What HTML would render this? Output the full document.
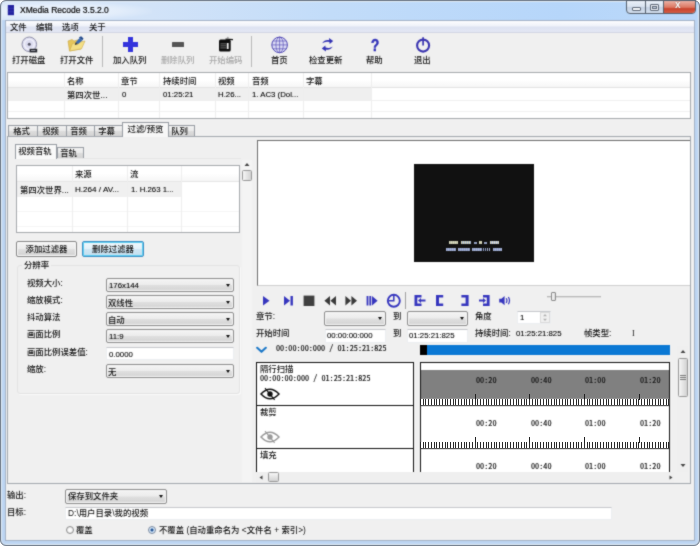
<!DOCTYPE html>
<html lang="zh-CN">
<head>
<meta charset="utf-8">
<title>XMedia Recode 3.5.2.0</title>
<style>
*{box-sizing:border-box;margin:0;padding:0}
html,body{width:700px;height:546px;overflow:hidden;background:#fff}
body{font-family:"Liberation Sans","Noto Sans CJK SC",sans-serif;font-size:8.4px;font-weight:500;color:#111;position:relative;line-height:1}
#root{position:absolute;left:0;top:0;width:700px;height:546px;overflow:hidden;filter:url(#soft);will-change:transform}
#over{position:absolute;left:0;top:0;width:700px;height:546px;overflow:hidden;pointer-events:none}
.a{position:absolute}
.t{position:absolute;white-space:nowrap;line-height:10px;height:10px}
.l{font-size:7.8px;color:#000;-webkit-text-stroke:.1px #222}
.m{font-family:"Noto Sans Mono CJK SC","IPAGothic",monospace;font-size:8.2px;font-weight:400;color:#0c0c0c;-webkit-text-stroke:.15px #111}
#frame{left:0;top:0;width:700px;height:546px;background:#bdd5f2;border:1px solid #667180;border-radius:6px;box-shadow:inset 0 0 0 1px #e4f0fb}
#client{left:5px;top:20px;width:690px;height:521px;background:#f0f0f0;border:1px solid #a4b2c6}
#menubar{left:6px;top:21px;width:688px;height:12px;background:linear-gradient(180deg,#fcfcfe 0,#eff2f9 45%,#dde2f1 55%,#e3e7f4 100%);border-bottom:1px solid #d2d6e3}
.lb{background:#fff;border:1px solid #a6a9ad}
.cb{border:1px solid #8d8d8d;border-radius:2px;background:linear-gradient(180deg,#f4f4f4 0,#ececec 48%,#dfdfdf 52%,#d3d3d3 100%);box-shadow:inset 0 0 0 1px #f6f6f6}
.cb:after{content:"";position:absolute;right:3px;top:50%;margin-top:-1.5px;border:2.8px solid transparent;border-top:3px solid #111;border-bottom:0}
.tb{background:#fff;border:1px solid #eceef1;border-top-color:#c6c8cc}
.btn{border:1px solid #868686;border-radius:2px;background:linear-gradient(180deg,#f4f4f4 0,#ececec 48%,#dfdfdf 52%,#d1d1d1 100%);box-shadow:inset 0 0 0 1px #fbfbfb;text-align:center}
.tab{position:absolute;border:1px solid #979ca3;border-bottom:0;background:linear-gradient(180deg,#f2f2f2 0,#e9e9e9 50%,#dcdcdc 52%,#d3d3d3 100%);text-align:center;white-space:nowrap;overflow:visible}
.tab.s{background:#fff;z-index:2}
.vl{position:absolute;width:1px;background:#eeeeee;z-index:1}
</style>
</head>
<body>
<svg width="0" height="0" style="position:absolute"><defs><filter id="soft" x="0" y="0" width="100%" height="100%" color-interpolation-filters="sRGB"><feConvolveMatrix order="3" kernelMatrix="0.03 0.09 0.03 0.09 0.52 0.09 0.03 0.09 0.03" divisor="1" edgeMode="duplicate" preserveAlpha="true"/></filter></defs></svg>
<div id="root">
<div class="a" id="frame"></div>
<div class="a" style="left:2px;top:2px;width:696px;height:18px;background:linear-gradient(90deg,#dae8f9 0,#d2e3f8 150px,#c2dcf9 330px,#b6d6fa 560px,#bbd8f9 100%)"></div>
<div class="a" id="client"></div>
<div class="a" id="menubar"></div>

<!-- title -->
<div class="a" style="left:2px;top:2px;width:150px;height:18px;background:radial-gradient(ellipse at 40% 50%,rgba(255,255,255,.55) 0,rgba(255,255,255,.35) 45%,rgba(255,255,255,0) 75%)"></div>
<svg class="a" style="left:7px;top:5px" width="8" height="11" viewBox="0 0 8 11"><rect x="0.800" y="0" width="6.200" height="10.200" fill="#2424a0"/><path d="M0.800 3.400h6.200M0.800 6.800h6.200" stroke="#3a3ab8" stroke-width=".6"/></svg>
<div class="t" style="left:20px;top:5px;font-size:8.5px;color:#000;-webkit-text-stroke:.2px #111">XMedia Recode 3.5.2.0</div>

<!-- caption buttons -->
<div class="a" style="left:626px;top:0;width:70px;height:14px;border:1px solid #55606e;border-radius:0 0 4px 4px;overflow:hidden;background:linear-gradient(180deg,#e9eff7 0,#d9e3f0 45%,#c3d0e2 55%,#d3dfee 100%)">
  <div class="a" style="left:18px;top:0;width:1px;height:14px;background:#55606e"></div>
  <div class="a" style="left:36px;top:0;width:33px;height:14px;border-left:1px solid #55606e;background:linear-gradient(180deg,#ebb0a4 0,#dc7863 45%,#c9432d 55%,#d66a52 100%)"></div>
  <div class="a" style="left:5px;top:6px;width:9px;height:4px;border:1px solid #5d6776;background:#f6f9fc;border-radius:1px"></div>
  <div class="a" style="left:23px;top:3px;width:9px;height:7px;border:1px solid #5d6776;background:#eef2f8;border-radius:1px"></div>
  <div class="a" style="left:25px;top:5px;width:5px;height:3px;border:1px solid #5d6776;background:#cbd7e8"></div>
  <div class="t" style="left:48px;top:-1px;font-size:10px;font-weight:bold;color:#fff;text-shadow:0 0 1px #5a2a22;font-family:'Liberation Sans',sans-serif">x</div>
</div>

<!-- menu -->
<div class="t" style="left:10px;top:22px">文件</div>
<div class="t" style="left:36px;top:22px">编辑</div>
<div class="t" style="left:62px;top:22px">选项</div>
<div class="t" style="left:89px;top:22px">关于</div>

<!-- toolbar -->
<div class="a" style="left:6px;top:33px;width:688px;height:37px;background:#f0f0f0"></div>
<div class="a" style="left:102px;top:36px;width:1px;height:31px;background:#b8b8b8"></div>
<div class="a" style="left:251px;top:36px;width:1px;height:31px;background:#b8b8b8"></div>
<div class="t" style="left:12px;top:55px">打开磁盘</div>
<div class="t" style="left:60px;top:55px">打开文件</div>
<div class="t" style="left:113px;top:55px">加入队列</div>
<div class="t" style="left:161px;top:55px;color:#a8a8a8">删除队列</div>
<div class="t" style="left:209px;top:55px;color:#a8a8a8">开始编码</div>
<div class="t" style="left:271px;top:55px">首页</div>
<div class="t" style="left:309px;top:55px">检查更新</div>
<div class="t" style="left:366px;top:55px">帮助</div>
<div class="t" style="left:414px;top:55px">退出</div>
<!--ICONS-START-->
<svg class="a" style="left:21px;top:36px" width="17" height="17" viewBox="0 0 17 17"><circle cx="8.3" cy="8.3" r="7.3" fill="#dcdcf0" stroke="#8f8fa8" stroke-width="1"/><circle cx="8.3" cy="8.3" r="5" fill="none" stroke="#f4f4fb" stroke-width="1.6" opacity=".8"/><circle cx="8.3" cy="8.3" r="1.5" fill="#555566"/><rect x="8.6" y="12.8" width="7.6" height="3.6" fill="#22242b"/><rect x="10" y="14" width="4.5" height="1" fill="#9a9ca6"/></svg>
<svg class="a" style="left:67px;top:36px" width="19" height="16" viewBox="0 0 19 16"><path d="M1 5 L5 3.500 L7 5 L14 3 L14 13 L2.500 15 Z" fill="#e6c65a" stroke="#c9a440" stroke-width=".6"/><path d="M2.500 15 L5.500 7.500 L18 5 L14.500 12.800 Z" fill="#f4df85" stroke="#cfae4c" stroke-width=".6"/><path d="M8.600 6.600 L12.500 2 L15.500 4.200 L11.200 8 Z" fill="#3a6bb5"/><path d="M12 1.200 L14.200 0.300 L16.500 2.500 L15.500 4.200 L12.500 2 Z" fill="#234a8c"/><path d="M8.600 6.600 L11.200 8 L7.600 9 Z" fill="#333"/></svg>
<svg class="a" style="left:123px;top:37px" width="15" height="15" viewBox="0 0 15 15"><path d="M5 0h5v5h5v5h-5v5h-5v-5h-5v-5h5z" fill="#3434dc"/></svg>
<div class="a" style="left:172px;top:42px;width:12px;height:5px;background:#555;border-radius:.5px"></div>
<svg class="a" style="left:218px;top:36px" width="16" height="17" viewBox="218 36 16 17"><circle cx="227.8" cy="37.700" r="1" fill="#a9a9a9"/><path d="M225.500 38.400L233 39.100V40.200L225.500 39.800Z" fill="#151515"/><rect x="219" y="39.600" width="11.700" height="12" rx="1.600" fill="#0e0e0e"/><rect x="220.400" y="43" width="5.800" height="6" fill="#4a4a4a"/><path d="M220.400 44.500h5.800M220.400 46.500h5.800M220.400 48.300h5.800" stroke="#222" stroke-width=".7"/><rect x="226.800" y="43" width="1.800" height="6" fill="#f2f2f2"/></svg>
<svg class="a" style="left:270px;top:36px" width="19" height="18" viewBox="270 36 19 18"><circle cx="279.600" cy="44.900" r="7.800" fill="#dcdcf5" stroke="#5048b4" stroke-width="1"/><ellipse cx="279.600" cy="44.900" rx="3.700" ry="7.800" fill="none" stroke="#5a52b8" stroke-width=".7"/><path d="M279.600 37.100V52.700M271.800 44.900H287.400M273 41H286.200M273 48.800H286.200" stroke="#5a52b8" stroke-width=".7" fill="none"/></svg>
<svg class="a" style="left:320px;top:36px" width="15" height="18" viewBox="0 0 15 18"><path d="M2.200 7.200C4 4.200 7 3.400 9.200 4.200L9 2.100L13.200 5L9.700 8L9.400 6.100C7 5.300 4.500 5.700 2.200 7.200Z" fill="#3232b4"/><path d="M12.800 10.400C11 13.400 8 14.200 5.800 13.400L6 15.500L1.800 12.600L5.300 9.600L5.600 11.500C8 12.300 10.500 11.900 12.800 10.400Z" fill="#3232b4"/></svg>
<div class="t" style="left:371px;top:38px;font-size:16.500px;line-height:14px;height:14px;font-weight:bold;color:#3232b8;-webkit-text-stroke:.5px #3232b8;font-family:'Liberation Sans',sans-serif;transform:scaleX(.82);transform-origin:0 0">?</div>
<svg class="a" style="left:415px;top:36px" width="17" height="18" viewBox="415 36 17 18"><circle cx="423.100" cy="45.600" r="6" fill="none" stroke="#3a34b0" stroke-width="2.100"/><path d="M423.100 37.300V45.600" stroke="#3a34b0" stroke-width="1.700"/></svg>
<!--ICONS-END-->

<!-- file list -->
<div class="a lb" style="left:7px;top:72px;width:684px;height:47px"></div>
<div class="a" style="left:8px;top:88px;width:363px;height:13px;background:#efefef"></div>
<div class="a" style="left:8px;top:73px;width:682px;height:15px;background:linear-gradient(180deg,#fff 0,#fff 50%,#f6f6f6 100%);border-bottom:1px solid #e3e3e3"></div>
<div class="vl" style="left:64px;top:73px;height:45px"></div>
<div class="vl" style="left:118px;top:73px;height:45px"></div>
<div class="vl" style="left:159px;top:73px;height:45px"></div>
<div class="vl" style="left:215px;top:73px;height:45px"></div>
<div class="vl" style="left:248px;top:73px;height:45px"></div>
<div class="vl" style="left:303px;top:73px;height:45px"></div>
<div class="vl" style="left:371px;top:73px;height:45px"></div>
<div class="a" style="left:8px;top:100px;width:682px;height:1px;background:#efefef"></div>
<div class="a" style="left:8px;top:111px;width:682px;height:1px;background:#f1f1f1"></div>
<div class="t" style="left:67px;top:76px">名称</div>
<div class="t" style="left:121px;top:76px">章节</div>
<div class="t" style="left:163px;top:76px">持续时间</div>
<div class="t" style="left:218px;top:76px">视频</div>
<div class="t" style="left:252px;top:76px">音频</div>
<div class="t" style="left:306px;top:76px">字幕</div>
<div class="t" style="left:67px;top:90px">第四次世...</div>
<div class="t l" style="left:122px;top:90px">0</div>
<div class="t l" style="left:163px;top:90px">01:25:21</div>
<div class="t l" style="left:218px;top:90px">H.26...</div>
<div class="t l" style="left:252px;top:90px">1. AC3 (Dol...</div>

<!-- main tabs -->
<div class="a" style="left:7px;top:136px;width:684px;height:348px;border:1px solid #a3a8ae;background:#f0f0f0"></div>
<div class="tab" style="left:8px;top:125px;width:30px;height:11px;line-height:11px;padding-right:3px">格式</div>
<div class="tab" style="left:37px;top:125px;width:30px;height:11px;line-height:11px;padding-right:3px">视频</div>
<div class="tab" style="left:66px;top:125px;width:29px;height:11px;line-height:11px;padding-right:4px">音频</div>
<div class="tab" style="left:94px;top:125px;width:29px;height:11px;line-height:11px;padding-right:4px">字幕</div>
<div class="tab" style="left:168px;top:125px;width:27px;height:11px;line-height:11px;padding-right:4px">队列</div>
<div class="tab s" style="left:122px;top:122px;width:47px;height:15px;line-height:13px;background:#f7f7f7">过滤/预览</div>
<!--LEFT-START-->
<!-- inner tabs -->
<div class="a" style="left:15px;top:158px;width:226px;height:1px;background:#e6e6e6"></div>
<div class="a" style="left:242px;top:160px;width:10px;height:322px;background:#f4f4f4"></div>
<div class="tab" style="left:57px;top:147px;width:27px;height:11px;line-height:11px;padding-right:4px">音轨</div>
<div class="tab s" style="left:15px;top:144px;width:42px;height:15px;line-height:13px;background:#f9f9f9;padding-right:2px">视频音轨</div>
<!-- stream list -->
<div class="a lb" style="left:16px;top:165px;width:224px;height:68px"></div>
<div class="a" style="left:17px;top:182px;width:164px;height:15px;background:#f0f0f0"></div>
<div class="vl" style="left:72px;top:166px;height:66px"></div>
<div class="vl" style="left:127px;top:166px;height:66px"></div>
<div class="vl" style="left:181px;top:166px;height:66px"></div>
<div class="a" style="left:17px;top:211px;width:222px;height:1px;background:#f5f5f5"></div>
<div class="a" style="left:17px;top:226px;width:222px;height:1px;background:#f5f5f5"></div>
<div class="a" style="left:17px;top:166px;width:222px;height:16px;background:linear-gradient(180deg,#fff 0,#fff 50%,#f6f6f6 100%);border-bottom:1px solid #e6e6e6"></div>
<div class="t" style="left:75px;top:169px">来源</div>
<div class="t" style="left:130px;top:169px">流</div>
<div class="t" style="left:20px;top:185px">第四次世界...</div>
<div class="t l" style="left:75px;top:185px;font-size:8.1px">H.264 / AV...</div>
<div class="t l" style="left:131px;top:185px">1. H.263 1...</div>
<!-- left scrollbar -->
<svg class="a" style="left:244px;top:162px" width="6" height="5" viewBox="0 0 6 5"><path d="M0.5 4 L3 1 L5.5 4 Z" fill="#444"/></svg>
<div class="a" style="left:242px;top:170px;width:10px;height:11px;border:1px solid #979797;border-radius:1.5px;background:linear-gradient(90deg,#f6f6f6,#e4e4e4 50%,#d2d2d2)"></div>
<!-- buttons -->
<div class="a btn" style="left:16px;top:241px;width:61px;height:16px;line-height:14px">添加过滤器</div>
<div class="a btn" style="left:82px;top:241px;width:62px;height:16px;line-height:14px;border-color:#3c8fc4;box-shadow:inset 0 0 0 1px #5fd0f2;background:linear-gradient(180deg,#f0f8fc 0,#e3f1f9 48%,#cfe6f3 52%,#c2dff0 100%)">删除过滤器</div>
<!-- group -->
<div class="a" style="left:17px;top:265px;width:223px;height:129px;border:1px solid #e3e3e3;border-radius:3px;box-shadow:1px 1px 0 #fafafa"></div>
<div class="t" style="left:22px;top:260px;background:#f0f0f0;padding:0 2px">分辨率</div>
<div class="t" style="left:27px;top:278px">视频大小:</div>
<div class="t" style="left:27px;top:295px">缩放模式:</div>
<div class="t" style="left:27px;top:312px">抖动算法</div>
<div class="t" style="left:27px;top:329px">画面比例</div>
<div class="t" style="left:27px;top:347px">画面比例误差值:</div>
<div class="t" style="left:27px;top:364px">缩放:</div>
<div class="a cb" style="left:106px;top:278px;width:128px;height:14px"></div>
<div class="a cb" style="left:106px;top:295px;width:128px;height:14px"></div>
<div class="a cb" style="left:106px;top:312px;width:128px;height:14px"></div>
<div class="a cb" style="left:106px;top:329px;width:128px;height:14px"></div>
<div class="a tb" style="left:106px;top:347px;width:128px;height:13px"></div>
<div class="a cb" style="left:106px;top:364px;width:128px;height:14px"></div>
<div class="t l" style="left:109px;top:280.5px">176x144</div>
<div class="t" style="left:108px;top:297.6px">双线性</div>
<div class="t" style="left:108px;top:314.6px">自动</div>
<div class="t l" style="left:109px;top:331.5px">11:9</div>
<div class="t l" style="left:109px;top:349.5px">0.0000</div>
<div class="t" style="left:108px;top:366.6px">无</div>
<!--LEFT-END-->
<!--RIGHT-START-->
<div class="a" style="left:257px;top:140px;width:433px;height:146px;background:#fff;border:1px solid #6e6e6e;border-right:0;border-bottom-color:#cfcfcf"></div>
<div class="a" style="left:414px;top:164px;width:120px;height:98px;background:#111"></div>
<div class="a" style="left:449.3px;top:240.8px;width:8.6px;height:3.3px;background:repeating-linear-gradient(90deg,#d9d9bc 0 0.80px,#b9bfa8 0.80px 1.51px,rgba(17,17,17,.55) 1.51px 2.1px)"></div>
<div class="a" style="left:460.6px;top:240.8px;width:10.1px;height:3.3px;background:repeating-linear-gradient(90deg,#d4d4b4 0 0.80px,#9fb0d0 0.80px 1.51px,rgba(17,17,17,.55) 1.51px 2.1px)"></div>
<div class="a" style="left:473.9px;top:242.0px;width:2.8px;height:2.1px;background:repeating-linear-gradient(90deg,#9aa6c4 0 0.80px,#8f9fc8 0.80px 1.51px,rgba(17,17,17,.55) 1.51px 2.1px)"></div>
<div class="a" style="left:478.9px;top:240.8px;width:3.6px;height:3.3px;background:repeating-linear-gradient(90deg,#dcdcc0 0 0.80px,#c8c8a8 0.80px 1.51px,rgba(17,17,17,.55) 1.51px 2.1px)"></div>
<div class="a" style="left:484.0px;top:242.0px;width:2.6px;height:2.1px;background:repeating-linear-gradient(90deg,#9aa6c4 0 0.80px,#8f9fc8 0.80px 1.51px,rgba(17,17,17,.55) 1.51px 2.1px)"></div>
<div class="a" style="left:489.6px;top:240.8px;width:9.0px;height:3.3px;background:repeating-linear-gradient(90deg,#e0e0c8 0 0.80px,#a9b6d6 0.80px 1.51px,rgba(17,17,17,.55) 1.51px 2.1px)"></div>
<div class="a" style="left:445.6px;top:247.6px;width:10.5px;height:3.2px;background:repeating-linear-gradient(90deg,#a9b4d8 0 0.80px,#8f9fc8 0.80px 1.51px,rgba(17,17,17,.55) 1.51px 2.1px)"></div>
<div class="a" style="left:458.3px;top:247.6px;width:12.4px;height:3.2px;background:repeating-linear-gradient(90deg,#a4b0d4 0 0.80px,#8c9cc4 0.80px 1.51px,rgba(17,17,17,.55) 1.51px 2.1px)"></div>
<div class="a" style="left:471.8px;top:247.6px;width:19.3px;height:3.2px;background:repeating-linear-gradient(90deg,#aab6d8 0 0.80px,#8f9fc8 0.80px 1.51px,rgba(17,17,17,.55) 1.51px 2.1px)"></div>
<div class="a" style="left:492.6px;top:247.6px;width:9.2px;height:3.2px;background:repeating-linear-gradient(90deg,#a9b4d8 0 0.80px,#8f9fc8 0.80px 1.51px,rgba(17,17,17,.55) 1.51px 2.1px)"></div>
<svg class="a" style="left:262px;top:290px" width="250" height="20" viewBox="262 290 250 20">
<path d="M263 296 L269.5 300.8 L263 305.6Z" fill="#3636be"/>
<path d="M284 296 L290 300.8 L284 305.6Z M290.5 296h2.4v9.6h-2.4z" fill="#3636be"/>
<rect x="303.6" y="295.6" width="10.8" height="10.4" fill="#404040"/>
<path d="M330 296 L324.4 300.8 L330 305.6Z M336 296 L330.4 300.8 L336 305.6Z" fill="#3a3a3a"/>
<path d="M345.4 296 L351 300.8 L345.4 305.6Z M351.4 296 L357 300.8 L351.4 305.6Z" fill="#3a3a3a"/>
<path d="M366.6 296h1.8v9.6h-1.8z M369.4 296h1.8v9.6h-1.8z M372 296 L377.6 300.8 L372 305.6Z" fill="#3636be"/>
<circle cx="393.8" cy="300.8" r="6" fill="none" stroke="#3636be" stroke-width="1.9"/><path d="M393.8 295V300.8H388.5" fill="none" stroke="#3636be" stroke-width="1.5"/>
<rect x="405" y="292" width="1" height="17" fill="#a0a0a0"/>
<path d="M414.5 295h7v2.4h-4.2v6.2h4.200v2.400h-7z" fill="#3636be"/><path d="M418 300.500l3-2.600v1.700h4.500v1.800h-4.500v1.700z" fill="#3636be"/>
<path d="M436 295h7.2v2.400h-4.200v6.200h4.200v2.400h-7.200z" fill="#3636be"/>
<path d="M468.600 295h-7.200v2.400h4.200v6.200h-4.200v2.400h7.200z" fill="#3636be"/>
<path d="M489.600 295h-6.600v2.400h3.800v6.200h-3.800v2.400h6.600z" fill="#3636be"/><path d="M486 300.500l-3-2.600v1.700h-4v1.800h4v1.700z" fill="#3636be"/>
<path d="M499.200 298.800h2.200l3.200-2.800v9.200l-3.200-2.800h-2.200z" fill="#3636be"/><path d="M506.200 298.200q1.500 2.400 0 4.800 M508.400 297q2.200 3.600 0 7.200" fill="none" stroke="#3636be" stroke-width="1.200"/>
</svg>
<div class="a" style="left:547px;top:296px;width:54px;height:2px;background:#dcdcdc;border-top:1px solid #b8b8b8"></div>
<div class="a" style="left:551px;top:292px;width:5px;height:9px;border:1px solid #8a8a8a;border-radius:1px;background:linear-gradient(90deg,#f8f8f8,#dcdcdc)"></div>
<div class="t" style="left:256px;top:311px">章节:</div>
<div class="a cb" style="left:324px;top:311px;width:62px;height:15px"></div>
<div class="t" style="left:393px;top:311px">到</div>
<div class="a cb" style="left:407px;top:311px;width:61px;height:15px"></div>
<div class="t" style="left:475px;top:311px">角度</div>
<div class="a tb" style="left:517px;top:311px;width:34px;height:13px"></div>
<div class="t l" style="left:520px;top:313px">1</div>
<div class="a" style="left:540px;top:312px;width:10px;height:11px;background:#f0f0f0;border:1px solid #dadada"></div>
<svg class="a" style="left:542px;top:313px" width="6" height="9" viewBox="0 0 6 9"><path d="M1 3.200L3 1L5 3.200Z M1 5.800L3 8L5 5.800Z" fill="#b0b0b0"/></svg>
<div class="t" style="left:256px;top:328px">开始时间</div>
<div class="a tb" style="left:325px;top:329px;width:61px;height:14px"></div>
<div class="t l" style="left:327px;top:331px">00:00:00:000</div>
<div class="t" style="left:393px;top:328px">到</div>
<div class="a tb" style="left:407px;top:329px;width:61px;height:14px"></div>
<div class="t l" style="left:409px;top:331px">01:25:21:825</div>
<div class="t" style="left:475px;top:328px">持续时间:</div>
<div class="t l" style="left:516px;top:329px">01:25:21:825</div>
<div class="t" style="left:584px;top:328px">帧类型:</div>
<div class="t" style="left:632px;top:329px;font-family:'Liberation Serif',serif;font-size:8px">I</div>
<svg class="a" style="left:256px;top:346px" width="11" height="8" viewBox="0 0 11 8"><path d="M1.200 1.800L5.500 5.800L9.800 1.800" fill="none" stroke="#1c78c8" stroke-width="2.100" stroke-linecap="round" stroke-linejoin="round"/></svg>
<div class="t m" style="left:276px;top:342px">00:00:00:000 / 01:25:21:825</div>
<div class="a" style="left:420px;top:345px;width:250px;height:10px;background:#0a78d4"></div>
<div class="a" style="left:420px;top:345px;width:7px;height:10px;background:#000"></div>
<div class="a" style="left:255px;top:361px;width:418px;height:111px;overflow:hidden">
<div class="a" style="left:1px;top:1px;width:158px;height:44px;background:#fff;border:1px solid #111"></div>
<div class="t" style="left:5px;top:3px">隔行扫描</div>
<div class="t m" style="left:5px;top:11px">00:00:00:000 / 01:25:21:825</div>
<svg class="a" style="left:5px;top:26px" width="20" height="14" viewBox="0 0 20 14"><path d="M1 7 Q10 -2.500 19 7 Q10 16.500 1 7Z" fill="none" stroke="#111" stroke-width="1.500"/><circle cx="10" cy="7" r="2.700" fill="#111"/><path d="M5 1.200 L14.600 12.800" stroke="#111" stroke-width="1.100"/></svg>
<div class="a" style="left:165px;top:1px;width:250px;height:44px;background:#fff;border:1px solid #111"></div>
<div class="a" style="left:166px;top:9px;width:248px;height:29px;background:#808080"></div>
<div class="t m" style="left:221px;top:13px">00:20</div>
<div class="t m" style="left:276px;top:13px">00:40</div>
<div class="t m" style="left:330px;top:13px">01:00</div>
<div class="t m" style="left:385px;top:13px">01:20</div>
<div class="a" style="left:1px;top:44px;width:158px;height:44px;background:#fff;border:1px solid #111"></div>
<div class="t" style="left:5px;top:46px">裁剪</div>
<svg class="a" style="left:5px;top:69px" width="20" height="14" viewBox="0 0 20 14"><path d="M1 7 Q10 -2.500 19 7 Q10 16.500 1 7Z" fill="none" stroke="#9a9a9a" stroke-width="1.500"/><circle cx="10" cy="7" r="2.700" fill="#9a9a9a"/><path d="M5 1.200 L14.600 12.800" stroke="#9a9a9a" stroke-width="1.100"/></svg>
<div class="a" style="left:165px;top:44px;width:250px;height:44px;background:#fff;border:1px solid #111"></div>
<div class="t m" style="left:221px;top:56px">00:20</div>
<div class="t m" style="left:276px;top:56px">00:40</div>
<div class="t m" style="left:330px;top:56px">01:00</div>
<div class="t m" style="left:385px;top:56px">01:20</div>
<div class="a" style="left:1px;top:87px;width:158px;height:44px;background:#fff;border:1px solid #111"></div>
<div class="t" style="left:5px;top:89px">填充</div>
<svg class="a" style="left:5px;top:112px" width="20" height="14" viewBox="0 0 20 14"><path d="M1 7 Q10 -2.500 19 7 Q10 16.500 1 7Z" fill="none" stroke="#9a9a9a" stroke-width="1.500"/><circle cx="10" cy="7" r="2.700" fill="#9a9a9a"/><path d="M5 1.200 L14.600 12.800" stroke="#9a9a9a" stroke-width="1.100"/></svg>
<div class="a" style="left:165px;top:87px;width:250px;height:44px;background:#fff;border:1px solid #111"></div>
<div class="t m" style="left:221px;top:99px">00:20</div>
<div class="t m" style="left:276px;top:99px">00:40</div>
<div class="t m" style="left:330px;top:99px">01:00</div>
<div class="t m" style="left:385px;top:99px">01:20</div>
</div>
<div class="a" style="left:256px;top:472px;width:418px;height:11px;background:#efefef"></div>
<svg class="a" style="left:259px;top:475px" width="4" height="5" viewBox="0 0 4 5"><path d="M3.500 0.500L0.500 2.500L3.500 4.500Z" fill="#444"/></svg>
<svg class="a" style="left:669px;top:475px" width="4" height="5" viewBox="0 0 4 5"><path d="M0.500 0.500L3.500 2.500L0.500 4.500Z" fill="#444"/></svg>
<div class="a" style="left:268px;top:472px;width:11px;height:10px;border:1px solid #979797;border-radius:1.500px;background:linear-gradient(180deg,#f6f6f6,#e4e4e4 50%,#d2d2d2)"></div>
<div class="a" style="left:677px;top:346px;width:11px;height:126px;background:#efefef"></div>
<svg class="a" style="left:680px;top:349px" width="6" height="5" viewBox="0 0 6 5"><path d="M0.500 4 L3 1 L5.500 4 Z" fill="#444"/></svg>
<svg class="a" style="left:680px;top:463px" width="6" height="5" viewBox="0 0 6 5"><path d="M0.500 1 L3 4 L5.500 1 Z" fill="#444"/></svg>
<div class="a" style="left:678px;top:358px;width:10px;height:39px;border:1px solid #979797;border-radius:1.500px;background:linear-gradient(90deg,#f6f6f6,#e4e4e4 50%,#d2d2d2)"></div>
<div class="a" style="left:680px;top:375px;width:6px;height:5px;background:repeating-linear-gradient(180deg,#7a7a7a 0 1px,transparent 1px 2px)"></div>
<!--RIGHT-END-->
<!--BOTTOM-START-->
<div class="t" style="left:7px;top:490px">输出:</div>
<div class="t" style="left:7px;top:507px">目标:</div>
<div class="a cb" style="left:65px;top:489px;width:102px;height:15px"></div>
<div class="t" style="left:68px;top:491px">保存到文件夹</div>
<div class="a tb" style="left:65px;top:507px;width:547px;height:13px"></div>
<div class="t" style="left:68px;top:508px">D:\用户目录\我的视频</div>
<div class="a" style="left:66px;top:526px;width:8px;height:8px;border-radius:50%;border:1px solid #8e8f8f;background:radial-gradient(circle,#fdfdfd 30%,#d6d6d6 100%)"></div>
<div class="t" style="left:76px;top:525px">覆盖</div>
<div class="a" style="left:148px;top:526px;width:8px;height:8px;border-radius:50%;border:1px solid #7a8aa0;background:radial-gradient(circle,#1f3f70 0,#2b62a8 28%,#cfe3f6 45%,#e6eef7 100%)"></div>
<div class="t" style="left:159px;top:525px">不覆盖 (自动重命名为 &lt;文件名 + 索引&gt;)</div>
<!--BOTTOM-END-->
</div>
<div id="over"><!--OVER-START-->
<div class="a" style="left:420.3px;top:399px;width:249px;height:6px;background:repeating-linear-gradient(90deg,#2a2a2a 0 1px,#fff 1px 2.730px)"></div>
<div class="a" style="left:475px;top:394px;width:1px;height:6px;background:#222"></div>
<div class="a" style="left:529px;top:394px;width:1px;height:6px;background:#222"></div>
<div class="a" style="left:584px;top:394px;width:1px;height:6px;background:#222"></div>
<div class="a" style="left:639px;top:394px;width:1px;height:6px;background:#222"></div>
<div class="a" style="left:420.3px;top:442px;width:249px;height:6px;background:repeating-linear-gradient(90deg,#2a2a2a 0 1px,#fff 1px 2.730px)"></div>
<div class="a" style="left:475px;top:437px;width:1px;height:6px;background:#222"></div>
<div class="a" style="left:529px;top:437px;width:1px;height:6px;background:#222"></div>
<div class="a" style="left:584px;top:437px;width:1px;height:6px;background:#222"></div>
<div class="a" style="left:639px;top:437px;width:1px;height:6px;background:#222"></div>
<!--OVER-END--></div>
</body>
</html>
